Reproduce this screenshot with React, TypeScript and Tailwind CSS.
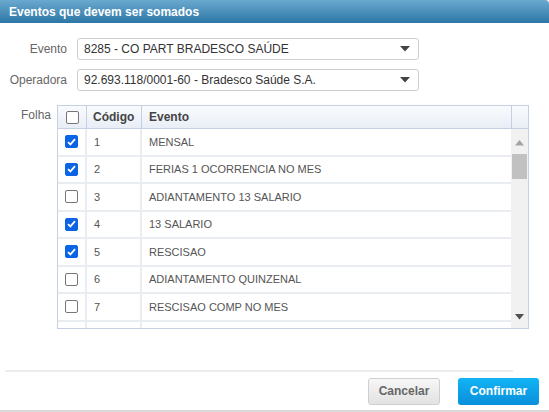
import { useState } from 'react';

type Folha = { codigo: number; evento: string; checked: boolean };

const initialFolhas: Folha[] = [
  { codigo: 1, evento: 'MENSAL', checked: true },
  { codigo: 2, evento: 'FERIAS 1 OCORRENCIA NO MES', checked: true },
  { codigo: 3, evento: 'ADIANTAMENTO 13 SALARIO', checked: false },
  { codigo: 4, evento: '13 SALARIO', checked: true },
  { codigo: 5, evento: 'RESCISAO', checked: true },
  { codigo: 6, evento: 'ADIANTAMENTO QUINZENAL', checked: false },
  { codigo: 7, evento: 'RESCISAO COMP NO MES', checked: false },
];

const Caret = () => (
  <svg width="10" height="6" viewBox="0 0 10 6" className="shrink-0">
    <path d="M0 0 H10 L5 5.5 Z" fill="#444" />
  </svg>
);

const Check = ({ checked, onChange }: { checked: boolean; onChange?: () => void }) => (
  <button
    type="button"
    onClick={onChange}
    className={`w-[13px] h-[13px] rounded-[2px] flex items-center justify-center ${
      checked ? 'bg-[#0b63e5] border border-[#0b63e5]' : 'bg-white border border-[#767676]'
    }`}
  >
    {checked && (
      <svg width="9" height="8" viewBox="0 0 9 8">
        <path d="M1 4.2 L3.4 6.4 L8 1.2" stroke="white" strokeWidth="1.8" fill="none" />
      </svg>
    )}
  </button>
);

const SelectBox = ({ value }: { value: string }) => (
  <div className="w-[342px] h-[22px] border border-[#cfcfcf] rounded-[3px] bg-white flex items-center justify-between pl-[6px] pr-[8px] text-[12px] text-[#333]">
    <span>{value}</span>
    <Caret />
  </div>
);

export default function App() {
  const [folhas, setFolhas] = useState(initialFolhas);

  const toggle = (codigo: number) =>
    setFolhas((prev) => prev.map((f) => (f.codigo === codigo ? { ...f, checked: !f.checked } : f)));

  return (
    <div className="w-[549px] h-[412px] bg-white flex flex-col font-['Liberation_Sans',Arial,sans-serif] overflow-hidden">
      {/* Header */}
      <div className="h-[23px] shrink-0 rounded-tr-[4px] bg-gradient-to-b from-[#6aa9cf] to-[#2b77a6] flex items-center pl-[9px]">
        <span className="text-white font-bold text-[12px]">Eventos que devem ser somados</span>
      </div>

      <div className="flex-1 flex flex-col pt-[15px]">
        <div className="flex items-center">
          <span className="w-[67px] text-right text-[12px] text-[#666]">Evento</span>
          <div className="ml-[10px]">
            <SelectBox value="8285 - CO PART BRADESCO SAÚDE" />
          </div>
        </div>
        <div className="flex items-center mt-[9px]">
          <span className="w-[67px] text-right text-[12px] text-[#666]">Operadora</span>
          <div className="ml-[10px]">
            <SelectBox value="92.693.118/0001-60 - Bradesco Saúde S.A." />
          </div>
        </div>

        <div className="flex mt-[14px]">
          <span className="pl-[21px] w-[57px] text-[12px] text-[#666] pt-[1px]">Folha</span>
          <div className="w-[472px] h-[224px] border border-[#c3d1e2] flex flex-col text-[11px] text-[#555]">
            {/* Table head */}
            <div className="h-[23px] shrink-0 flex border-b border-[#c3d1e2] bg-gradient-to-b from-[#f9fbfd] to-[#e9eef6]">
              <div className="w-[29px] border-r border-[#c3d1e2] flex items-center justify-center">
                <Check checked={false} />
              </div>
              <div className="w-[55px] border-r border-[#c3d1e2] flex items-center pl-[6px] font-bold text-[#444] text-[12px]">
                Código
              </div>
              <div className="flex-1 border-r border-[#c3d1e2] flex items-center pl-[7px] font-bold text-[#444] text-[12px]">
                Evento
              </div>
              <div className="w-[16px]" />
            </div>

            {/* Body */}
            <div className="flex-1 flex overflow-hidden">
              <div className="flex-1 overflow-hidden">
                {folhas.map((f) => (
                  <div key={f.codigo} className="h-[27.5px] flex border-b-2 border-[#e9edf2]">
                    <div className="w-[29px] border-r-2 border-[#e9edf2] flex items-center justify-center">
                      <Check checked={f.checked} onChange={() => toggle(f.codigo)} />
                    </div>
                    <div className="w-[55px] border-r-2 border-[#e9edf2] flex items-center pl-[7px]">{f.codigo}</div>
                    <div className="flex-1 flex items-center pl-[7px]">{f.evento}</div>
                  </div>
                ))}
                {/* next row, scrolled out of view */}
                <div className="h-[27.5px] flex">
                  <div className="w-[29px] border-r-2 border-[#e9edf2] flex items-center justify-center">
                    <Check checked={false} />
                  </div>
                  <div className="w-[55px] border-r-2 border-[#e9edf2]" />
                  <div className="flex-1" />
                </div>
              </div>
              {/* Scrollbar */}
              <div className="w-[17px] bg-[#f1f1f1] flex flex-col items-center">
                <svg width="9" height="6" viewBox="0 0 9 6" className="mt-[11px]">
                  <path d="M0 5.5 H9 L4.5 0 Z" fill="#a3a3a3" />
                </svg>
                <div className="w-[15px] h-[25px] bg-[#c1c1c1] mt-[8px]" />
                <div className="flex-1" />
                <svg width="9" height="6" viewBox="0 0 9 6" className="mb-[8px]">
                  <path d="M0 0 H9 L4.5 5.5 Z" fill="#505050" />
                </svg>
              </div>
            </div>
          </div>
        </div>

        <div className="flex-1" />

        {/* Footer */}
        <div className="mx-[5px] mr-[36px] border-t-2 border-[#ececec]" />
        <div className="h-[38px] flex items-center justify-end gap-[18px] pr-[10px]">
          <button className="w-[72px] h-[27px] rounded-[3px] border border-[#cfcfcf] bg-gradient-to-b from-[#f7f7f7] to-[#e2e2e2] text-[12px] font-bold text-[#666]">
            Cancelar
          </button>
          <button className="w-[81px] h-[27px] rounded-[3px] bg-gradient-to-b from-[#12b4f5] to-[#0a8fdb] text-[12px] font-bold text-white">
            Confirmar
          </button>
        </div>
        <div className="h-[2px] bg-[#d8d8d8]" />
      </div>
    </div>
  );
}
